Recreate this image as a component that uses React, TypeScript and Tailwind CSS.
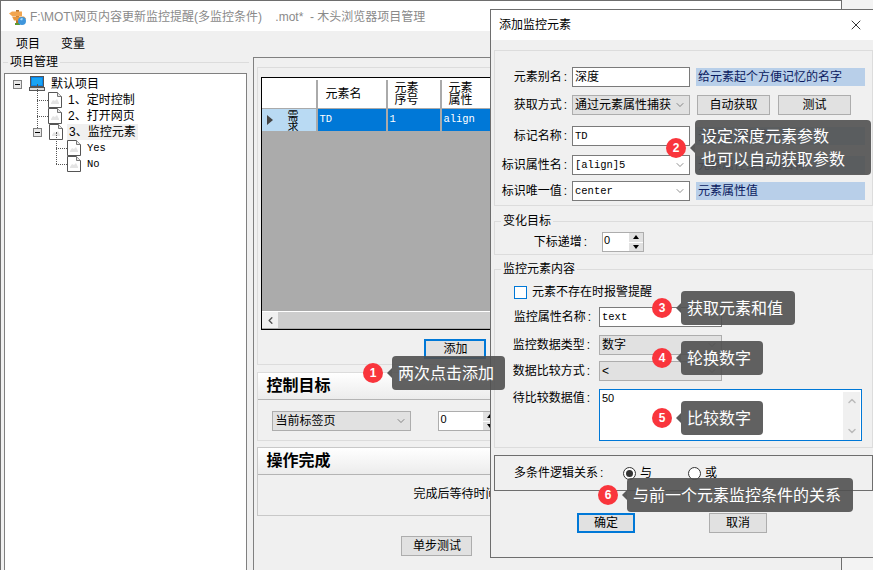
import { ReactNode } from 'react';
import { ChevronDown, ChevronUp, X } from 'lucide-react';

const lightBorder = 'border border-[#dcdcdc]';
const monoText = "font-['Liberation_Mono',monospace] text-[10.5px]";

function DocIcon() {
    return (
        <svg width="14" height="16" viewBox="0 0 14 16" className="shrink-0">
            <path d="M0.5 0.5H9.5L13.5 4.5V15.5H0.5Z" fill="#fff" stroke="#555" />
            <path d="M9.5 0.5V4.5H13.5" fill="#e8e8e8" stroke="#777" />
            <path d="M3 11l2-3 2 1 2-2 2 4v1H3z" fill="#e4e4e4" />
        </svg>
    );
}

function PcIcon() {
    return (
        <svg width="16" height="16" viewBox="0 0 16 16" className="shrink-0">
            <rect x="1.5" y="0.5" width="13" height="10" fill="#0a84e8" stroke="#555" />
            <rect x="3" y="2" width="10" height="7" fill="#18a4f4" />
            <rect x="0.5" y="11.5" width="15" height="3" fill="#ddd" stroke="#555" />
        </svg>
    );
}

function AppIcon() {
    return (
        <svg width="18" height="17" viewBox="0 0 18 17" className="shrink-0">
            <rect x="7" y="1" width="3" height="15" fill="#b9752c" />
            <rect x="6" y="14" width="5" height="2" fill="#5d9a2e" />
            <path d="M0 4.5L3 2.5H13V7H3Z" fill="#f2a54e" />
            <path d="M3 7.5H15L17 9.5L15 11.5H5Z" fill="#e8963c" />
            <circle cx="13" cy="12" r="4" fill="#3f96dc" />
            <path d="M11 10.5a2 2 0 0 1 3-1l-1 2z" fill="#a8d8f6" />
        </svg>
    );
}

function MinusBox() {
    return (
        <span className="flex h-[9px] w-[9px] shrink-0 items-center justify-center border border-[#808080] bg-[#e8e8e8]">
            <span className="h-px w-[5px] bg-black" />
        </span>
    );
}

function TreeRow({ indent, box, icon, text, mono, active, trunk }: { indent: number; box?: boolean; icon: ReactNode; text: string; mono?: boolean; active?: boolean; trunk?: number }) {
    return (
        <div className="relative flex h-4 items-center" style={{ paddingLeft: indent }}>
            {trunk !== undefined && (
                <span className="absolute top-[-8px] h-4 border-l border-dotted border-[#555]" style={{ left: trunk }} />
            )}
            {trunk !== undefined && !box && (
                <span className="absolute top-2 w-[11px] border-t border-dotted border-[#555]" style={{ left: trunk }} />
            )}
            {box && <span className="relative mr-[7px]"><MinusBox /></span>}
            <span className="relative">{icon}</span>
            <span className={`ml-1 px-0.5 leading-4 ${active ? 'bg-[#f0f0f0]' : ''} ${mono ? "font-['Liberation_Mono',monospace] text-[10.5px]" : 'text-[12px]'}`}>{text}</span>
        </div>
    );
}

function WinSelect({ text, w, h = 20, white, mono }: { text: string; w: number; h?: number; white?: boolean; mono?: boolean }) {
    return (
        <div
            className={`flex shrink-0 items-center justify-between pl-[2px] pr-[3px] border ${white ? 'border-[#7a7a7a] bg-white' : 'border-[#adadad] bg-[#e1e1e1]'}`}
            style={{ width: w, height: h }}
        >
            <span className={`whitespace-nowrap leading-none ${mono ? monoText : 'text-[12px]'}`}>{text}</span>
            <ChevronDown size={12} strokeWidth={1.2} className="shrink-0 text-[#444]" />
        </div>
    );
}

function WinInput({ text, w, mono }: { text: string; w: number; mono?: boolean }) {
    return (
        <div className="flex h-5 shrink-0 items-center border border-[#7a7a7a] bg-white pl-[2px]" style={{ width: w }}>
            <span className={`leading-none ${mono ? monoText : 'text-[12px]'}`}>{text}</span>
        </div>
    );
}

function WinButton({ text, w, focus }: { text: string; w: number; focus?: boolean }) {
    return (
        <div
            className={`flex h-5 shrink-0 items-center justify-center bg-[#e1e1e1] text-[12px] ${focus ? 'border-2 border-[#0078d7]' : 'border border-[#adadad]'}`}
            style={{ width: w }}
        >
            {text}
        </div>
    );
}

function Spinner({ w }: { w: number }) {
    return (
        <div className="flex h-5 shrink-0 border border-[#adadad] bg-white" style={{ width: w }}>
            <span className="flex-1 pl-[1px] text-[11px] leading-[15px]">0</span>
            <div className="flex w-[14px] flex-col gap-px bg-white">
                <span className="flex flex-1 items-center justify-center bg-[#e1e1e1]"><span className="border-x-[3px] border-b-[4px] border-x-transparent border-b-black" /></span>
                <span className="flex flex-1 items-center justify-center bg-[#e1e1e1]"><span className="border-x-[3px] border-t-[4px] border-x-transparent border-t-black" /></span>
            </div>
        </div>
    );
}

function GroupHeader({ text }: { text: string }) {
    return (
        <div className="flex h-[27px] items-center border-b border-[#b4b4b4] bg-gradient-to-b from-white to-[#ececec] pl-2 text-[16px] font-bold">{text}</div>
    );
}

function FieldRow({ label, labelW, pr = 5, mt, children }: { label: string; labelW: number; pr?: number; mt: number; children: ReactNode }) {
    return (
        <div className="flex items-center" style={{ marginTop: mt }}>
            <span className="shrink-0 text-right text-[12px]" style={{ width: labelW, paddingRight: pr }}>
                {label}<span className="ml-[2px]">:</span>
            </span>
            {children}
        </div>
    );
}

function Hint({ text }: { text: string }) {
    return (
        <span className="ml-[6px] flex h-[18px] w-[169px] shrink-0 items-center bg-[#b8cfe9] pl-[2px] text-[12px] text-[#0a1a60]">{text}</span>
    );
}

function Radio({ on }: { on?: boolean }) {
    return (
        <span className="flex h-[13px] w-[13px] shrink-0 items-center justify-center rounded-full border border-[#333] bg-white">
            {on && <span className="h-[7px] w-[7px] rounded-full bg-[#333]" />}
        </span>
    );
}

// numbered callout that sits over the screenshot
function Callout({ n, left, top, w, lines }: { n: number; left: number; top: number; w: number; lines: string[] }) {
    const h = lines.length > 1 ? 55 : 34;
    return (
        <div className="absolute flex items-center text-white" style={{ left, top, height: h }}>
            <span className="flex h-5 w-5 items-center justify-center rounded-full bg-[#f9353c] text-[12px] font-bold">{n}</span>
            <span className="ml-1 border-y-[5px] border-r-[5px] border-y-transparent border-r-[#5a5a5a]" />
            <div className="flex flex-col justify-center rounded bg-[#505050]/90 px-[6px] text-[16px] leading-[23px]" style={{ width: w, height: h }}>
                {lines.map((l) => <span key={l} className="whitespace-nowrap">{l}</span>)}
            </div>
        </div>
    );
}

export default function App() {
    return (
        <div className="relative h-[570px] w-[873px] overflow-hidden bg-[#f3f3f3] font-['Liberation_Sans','Noto_Sans_CJK_SC',sans-serif] text-black">
            {/* Main window */}
            <div className="flex h-full w-[842px] flex-col border-x border-t border-[#6e6e6e] bg-[#f0f0f0]">
                <div className="flex h-[30px] items-center gap-[3px] bg-white pl-2 pt-[2px]">
                    <AppIcon />
                    <span className="whitespace-pre text-[12px] text-[#8a8a8a]">F:\MOT\网页内容更新监控提醒(多监控条件)    .mot*  - 木头浏览器项目管理</span>
                </div>
                <div className="flex h-6 items-center gap-[21px] pl-[15px] pt-[2px] text-[12px]">
                    <span>项目</span>
                    <span>变量</span>
                </div>

                <div className="flex min-h-0 flex-1">
                    {/* Project tree */}
                    <fieldset className="ml-[2px] h-[520px] w-[247px] border-t border-[#dcdcdc] pt-[4px]">
                        <legend className="ml-[5px] px-[2px] text-[12px] leading-[14px]">项目管理</legend>
                        <div className="ml-[1px] h-[500px] w-[243px] border border-[#808080] bg-white pt-[2px]">
                            <TreeRow indent={8} box icon={<PcIcon />} text="默认项目" />
                            <TreeRow indent={43} trunk={32} icon={<DocIcon />} text="1、定时控制" />
                            <TreeRow indent={43} trunk={32} icon={<DocIcon />} text="2、打开网页" />
                            <TreeRow indent={28} box trunk={32} icon={<DocIcon />} text="3、监控元素" active />
                            <TreeRow indent={62} trunk={51} icon={<DocIcon />} text="Yes" mono />
                            <TreeRow indent={62} trunk={51} icon={<DocIcon />} text="No" mono />
                        </div>
                    </fieldset>

                    {/* Element panel */}
                    <div className="ml-[4px] mt-[2px] flex w-[589px] flex-col border-l border-t border-[#808080] pl-[3px] pt-[9px]">
                        <div className={`h-[298px] ${lightBorder} pl-[3px] pt-[9px]`}>
                            <div className="h-[253px] border border-black bg-[#ababab]">
                                <div className="flex h-[30px] border-t border-white bg-white pt-px text-[12px]">
                                    <span className="w-[56px] border-r-2 border-[#aaa]" />
                                    <span className="flex w-[70px] items-center border-r-2 border-[#aaa] pl-[7px]">元素名</span>
                                    <span className="flex w-[54px] items-center border-r-2 border-[#aaa] pl-[6px] leading-[12px]">元素<br />序号</span>
                                    <span className="flex flex-1 items-center pl-[6px] leading-[12px]">元素<br />属性</span>
                                </div>
                                <div className="flex h-[23px] border-t border-[#aaa] text-white">
                                    <span className="flex w-[56px] items-center overflow-hidden border-r-2 border-[#aaa] bg-[#b9daf3] pl-[5px]">
                                        <span className="border-y-[5px] border-l-[6px] border-y-transparent border-l-[#444]" />
                                        <span className="ml-[14px] self-start pt-[2px] text-[11px] leading-[11px] text-black">需<br />求</span>
                                    </span>
                                    <span className={`flex w-[70px] items-center border-r-2 border-[#aaa] bg-[#0078d7] pl-[1px] ${monoText}`}>TD</span>
                                    <span className={`flex w-[54px] items-center border-r-2 border-[#aaa] bg-[#0078d7] pl-[1px] ${monoText}`}>1</span>
                                    <span className={`flex flex-1 items-center bg-[#0078d7] pl-[1px] ${monoText}`}>align</span>
                                </div>
                                <div className="mt-[180px] flex h-[17px] items-center border-t border-white bg-[#f0f0f0]">
                                    <span className="flex w-[16px] justify-center font-bold"><ChevronDown size={11} strokeWidth={3} className="rotate-90 text-[#555]" /></span>
                                    <span className="h-full flex-1 bg-[#cdcdcd]" />
                                </div>
                            </div>
                            <div className="ml-[163px] mt-[9px]"><WinButton text="添加" w={62} focus /></div>
                        </div>

                        <div className={`mt-[7px] h-[69px] ${lightBorder} border-[#c8c8c8]`}>
                            <GroupHeader text="控制目标" />
                            <div className="flex items-center pl-[14px] pt-[11px]">
                                <WinSelect text="当前标签页" w={139} />
                                <span className="ml-[27px]"><Spinner w={60} /></span>
                            </div>
                        </div>

                        <div className="mt-[6px] h-[69px] border border-[#c8c8c8]">
                            <GroupHeader text="操作完成" />
                            <div className="pl-[155px] pt-[10px] text-[12px]">完成后等待时间</div>
                        </div>

                        <div className="ml-[144px] mt-[20px]"><WinButton text="单步测试" w={71} /></div>
                    </div>
                </div>
            </div>

            {/* Dialog window */}
            <div className="absolute left-[490px] top-[9px] flex h-[549px] w-[386px] flex-col border border-[#6e6e6e] bg-[#f0f0f0]">
                <div className="flex h-[30px] shrink-0 items-center justify-between bg-white pl-2 pr-[10px] text-[12px]">
                    <span>添加监控元素</span>
                    <X size={16} strokeWidth={1.2} className="mr-[1px]" />
                </div>

                <div className="ml-[3px] mt-[10px] h-[156px] w-[379px] shrink-0 border border-[#dcdcdc] pt-[16px]">
                    <FieldRow label="元素别名" labelW={77} mt={0}>
                        <WinInput text="深度" w={118} />
                        <Hint text="给元素起个方便记忆的名字" />
                    </FieldRow>
                    <FieldRow label="获取方式" labelW={77} mt={8}>
                        <WinSelect text="通过元素属性捕获" w={118} />
                        <span className="ml-[7px]"><WinButton text="自动获取" w={73} /></span>
                        <span className="ml-2"><WinButton text="测试" w={73} /></span>
                    </FieldRow>
                    <FieldRow label="标记名称" labelW={77} mt={11}>
                        <WinInput text="TD" w={118} mono />
                        <Hint text="元素标记名称" />
                    </FieldRow>
                    <FieldRow label="标识属性名" labelW={77} mt={9}>
                        <WinSelect text="[align]5" w={118} white mono />
                        <Hint text="元素属性或序列名称" />
                    </FieldRow>
                    <FieldRow label="标识唯一值" labelW={77} mt={6}>
                        <WinSelect text="center" w={118} white mono />
                        <Hint text="元素属性值" />
                    </FieldRow>
                </div>

                <fieldset className="ml-[3px] mt-[8px] h-[41px] w-[379px] shrink-0 border border-[#dcdcdc]">
                    <legend className="ml-[6px] px-[2px] text-[12px] leading-[14px]">变化目标</legend>
                    <FieldRow label="下标递增" labelW={97} mt={4}>
                        <span className="ml-[10px]"><Spinner w={42} /></span>
                    </FieldRow>
                </fieldset>

                <fieldset className="ml-[3px] mt-[7px] h-[186px] w-[379px] shrink-0 border border-[#dcdcdc]">
                    <legend className="ml-[6px] px-[2px] text-[12px] leading-[14px]">监控元素内容</legend>
                    <div className="ml-[19px] mt-[7px] flex items-center">
                        <span className="h-[13px] w-[13px] border border-[#0078d7] bg-white" />
                        <span className="ml-[5px] text-[12px]">元素不存在时报警提醒</span>
                    </div>
                    <FieldRow label="监控属性名称" labelW={104} pr={8} mt={6}>
                        <WinSelect text="text" w={123} white mono />
                    </FieldRow>
                    <FieldRow label="监控数据类型" labelW={104} pr={9} mt={8}>
                        <WinSelect text="数字" w={123} />
                    </FieldRow>
                    <FieldRow label="数据比较方式" labelW={104} pr={9} mt={6}>
                        <WinSelect text="<" w={123} />
                    </FieldRow>
                    <div className="mt-[8px] flex">
                        <span className="w-[104px] shrink-0 pr-[9px] text-right text-[12px]">待比较数据值<span className="ml-[2px]">:</span></span>
                        <div className="flex h-[52px] w-[263px] border border-[#0078d7] bg-white pl-[2px] pt-[2px] pr-px">
                            <span className="flex-1 text-[11px] leading-3">50</span>
                            <div className="flex w-[17px] flex-col items-center justify-between bg-[#f0f0f0] py-[3px] text-[#bbb]">
                                <ChevronUp size={12} strokeWidth={3} />
                                <ChevronDown size={12} strokeWidth={3} />
                            </div>
                        </div>
                    </div>
                </fieldset>

                <div className="ml-[3px] mt-[7px] flex h-[36px] w-[379px] shrink-0 items-center border border-[#6e6e6e] text-[12px]">
                    <span className="ml-[19px] w-[109px]">多条件逻辑关系<span className="ml-[2px]">:</span></span>
                    <Radio on />
                    <span className="ml-[4px] w-[48px]">与</span>
                    <Radio />
                    <span className="ml-[4px]">或</span>
                </div>

                <div className="mt-[22px] flex pl-[86px]">
                    <WinButton text="确定" w={58} focus />
                    <span className="ml-[74px]"><WinButton text="取消" w={58} /></span>
                </div>
            </div>

            {/* Callouts */}
            <Callout n={1} left={363} top={356} w={113} lines={['两次点击添加']} />
            <Callout n={2} left={666} top={120} w={176} lines={['设定深度元素参数', '也可以自动获取参数']} />
            <Callout n={3} left={652} top={291} w={114} lines={['获取元素和值']} />
            <Callout n={4} left={652} top={341} w={82} lines={['轮换数字']} />
            <Callout n={5} left={652} top={401} w={82} lines={['比较数字']} />
            <Callout n={6} left={598} top={478} w={226} lines={['与前一个元素监控条件的关系']} />
        </div>
    );
}
